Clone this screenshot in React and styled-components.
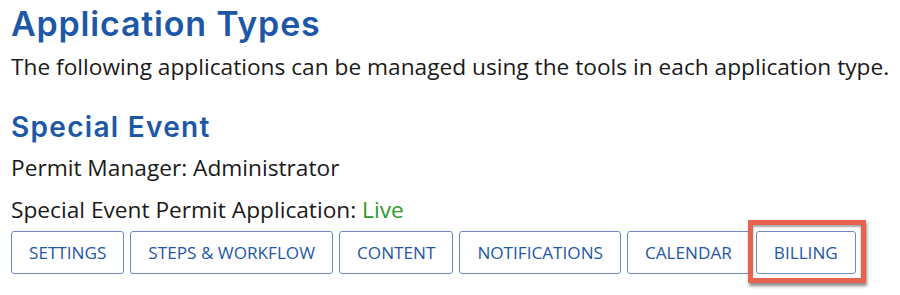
import React from "react"
import styled, { createGlobalStyle } from "styled-components"

const GlobalStyle = createGlobalStyle`
  body {
    margin: 0;
    background: #ffffff;
    font-family: "Open Sans", "Liberation Sans", sans-serif;
    color: #1a1a1a;
  }
`

const Page = styled.main`
  box-sizing: border-box;
  min-height: 100vh;
  padding: 4px 0 0 11px;
`

const Title = styled.h1`
  margin: 0;
  font-family: Inter, "Open Sans", sans-serif;
  font-weight: 600;
  font-size: 34px;
  line-height: 40px;
  letter-spacing: 0.8px;
  color: #1d58a8;
`

const Lead = styled.p`
  margin: 7px 0 0;
  font-size: 22.7px;
  line-height: 31px;
`

const Section = styled.section`
  margin-top: 28px;
`

const SectionTitle = styled.h2`
  margin: 0;
  font-family: Inter, "Open Sans", sans-serif;
  font-weight: 600;
  font-size: 28px;
  line-height: 34px;
  letter-spacing: 1.3px;
  color: #1d58a8;
`

const Line = styled.p`
  margin: ${p => p.gap || 0}px 0 0;
  font-size: 22.7px;
  line-height: 31px;
`

const Status = styled.span`
  color: #2d9a2d;
`

const ButtonRow = styled.div`
  display: flex;
  gap: 6px;
  margin-top: 6px;
  padding-bottom: 12px;
`

const Button = styled.button`
  height: 43px;
  padding: 0 17px;
  background: #fff;
  border: 1px solid #7088c0;
  border-radius: 3px;
  font-family: "Open Sans", sans-serif;
  font-size: 17.15px;
  color: #2357a7;
  text-transform: uppercase;
  cursor: pointer;
`

const Highlight = styled.span`
  position: relative;
  display: flex;
  &::after {
    content: "";
    position: absolute;
    inset: -11px -10px -9px -8px;
    border: 5px solid #e8634f;
    box-shadow: 1px 3px 3px rgba(0, 0, 0, 0.45), inset 0 2px 2px rgba(0, 0, 0, 0.35);
    pointer-events: none;
  }
`

const tools = ["Settings", "Steps & Workflow", "Content", "Notifications", "Calendar"]

export default function App() {
  return (
    <>
      <GlobalStyle />
      <Page>
        <Title>Application Types</Title>
        <Lead>The following applications can be managed using the tools in each application type.</Lead>
        <Section>
          <SectionTitle>Special Event</SectionTitle>
          <Line gap={8}>Permit Manager: Administrator</Line>
          <Line gap={11}>
            Special Event Permit Application: <Status>Live</Status>
          </Line>
          <ButtonRow>
            {tools.map(t => (
              <Button key={t}>{t}</Button>
            ))}
            <Highlight>
              <Button>Billing</Button>
            </Highlight>
          </ButtonRow>
        </Section>
      </Page>
    </>
  )
}
